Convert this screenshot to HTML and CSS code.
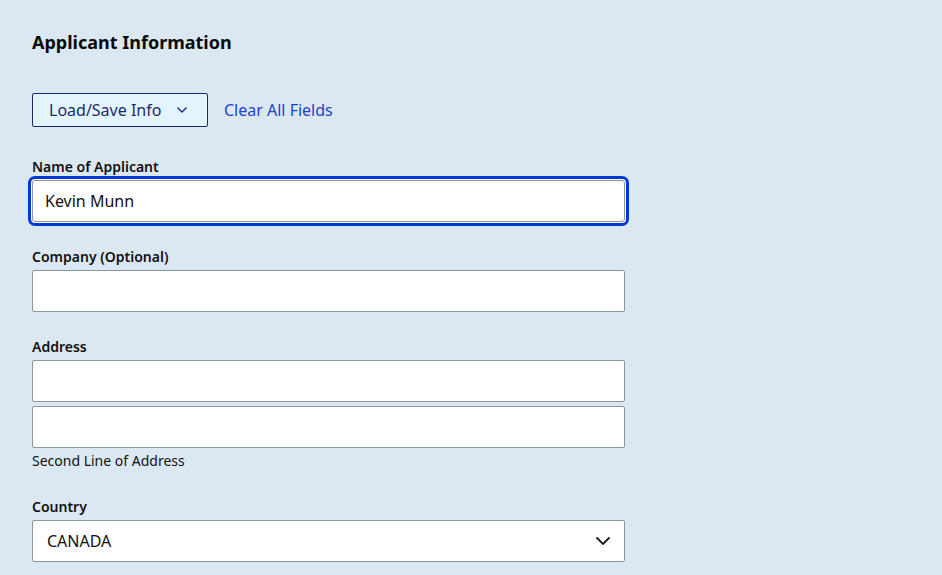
FILE: index.html
```html
<!DOCTYPE html>
<html lang="en">
<head>
<meta charset="utf-8">
<title>Applicant Information</title>
<link rel="stylesheet" href="styles.css">
</head>
<body>
<main class="page">
  <h2 class="title">Applicant Information</h2>
  <div class="actions">
    <button class="load-btn" type="button">
      <span>Load/Save Info</span>
      <svg class="btn-chev" width="12" height="8" viewBox="0 0 12 8"><path d="M1.5 1.5 L6 6 L10.5 1.5" fill="none" stroke="#1b2a80" stroke-width="1.4"/></svg>
    </button>
    <a class="clear-link" href="#">Clear All Fields</a>
  </div>

  <div class="field first">
    <label class="label">Name of Applicant</label>
    <div class="input focused">Kevin Munn</div>
  </div>

  <div class="field">
    <label class="label">Company (Optional)</label>
    <div class="input"></div>
  </div>

  <div class="field">
    <label class="label">Address</label>
    <div class="input"></div>
    <div class="input second"></div>
    <div class="hint">Second Line of Address</div>
  </div>

  <div class="field country">
    <label class="label">Country</label>
    <div class="input select">
      <span>CANADA</span>
      <svg class="sel-chev" width="16" height="10" viewBox="0 0 16 10"><path d="M1.5 1.5 L8 8 L14.5 1.5" fill="none" stroke="#1a1a1a" stroke-width="1.8"/></svg>
    </div>
  </div>
</main>
</body>
</html>
```

FILE: styles.css
```css
html, body {
  margin: 0;
  padding: 0;
  background: #dce8f1;
}
body {
  font-family: "Noto Sans", "Open Sans", sans-serif;
  color: #111;
  height: 575px;
  overflow: hidden;
}
.page {
  padding: 28px 0 0 32px;
  width: 594px;
}
.title {
  margin: 0;
  font-size: 18px;
  line-height: 28px;
  font-weight: 700;
  color: #0b0b0b;
}
.actions {
  display: flex;
  align-items: center;
  gap: 16px;
  margin-top: 37px;
}
.load-btn {
  display: flex;
  align-items: center;
  gap: 15px;
  height: 34px;
  box-sizing: border-box;
  width: 176px;
  padding: 0 0 0 16px;
  border: 1px solid #1b2a6b;
  border-radius: 2px;
  background: #e4f4fd;
  color: #1b2a6b;
  font-family: inherit;
  font-size: 16px;
}
.clear-link {
  color: #1d3fcf;
  text-decoration: none;
  font-size: 16px;
}
.field {
  margin-top: 25px;
}
.field.first {
  margin-top: 30px;
}
.label {
  display: block;
  font-size: 14px;
  line-height: 20px;
  font-weight: 600;
  color: #111;
  margin-bottom: 3px;
}
.input {
  box-sizing: border-box;
  height: 42px;
  width: 593px;
  background: #fff;
  border: 1px solid #8a969e;
  border-radius: 2px;
  font-size: 16px;
  line-height: 40px;
  padding: 0 12px;
  color: #111;
}
.input.focused {
  box-shadow: 0 0 0 1px #fff, 0 0 0 4px #0038d8;
  border-radius: 3px;
}
.input.second {
  margin-top: 4px;
}
.hint {
  font-size: 14px;
  line-height: 20px;
  margin-top: 3px;
  color: #111;
}
.field.country {
  margin-top: 26px;
}
.select {
  display: flex;
  align-items: center;
  justify-content: space-between;
  padding: 0 13px 0 14px;
}
```
